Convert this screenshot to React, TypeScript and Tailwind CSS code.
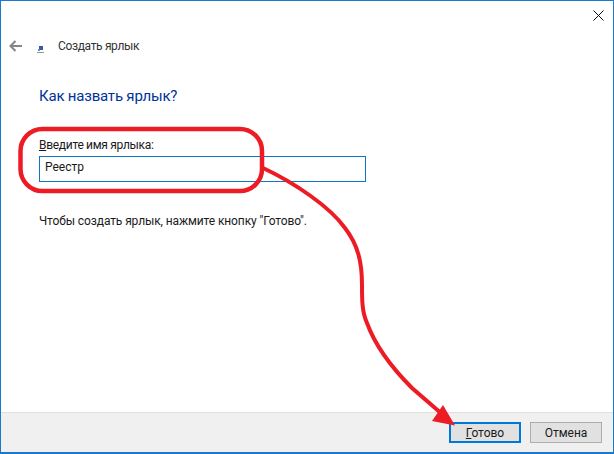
const font = { fontFamily: 'Roboto, "Noto Sans", sans-serif' }

function ShortcutIcon() {
  return (
    <svg width="7" height="7" viewBox="0 0 7 7" className="shrink-0">
      <rect x="2" y="0" width="4" height="4" fill="#2f5fa8" />
      <rect x="1" y="3" width="2" height="2" fill="#6f8ab5" />
      <rect x="0" y="6" width="7" height="1" fill="#8a93a0" />
    </svg>
  )
}

function Annotation() {
  return (
    <svg
      width="614"
      height="454"
      viewBox="0 0 614 454"
      className="absolute left-0 top-0 pointer-events-none"
      fill="none"
    >
      <rect x="20.5" y="129" width="241.5" height="62" rx="22" stroke="#ed1c24" strokeWidth="4.5" />
      <path
        d="M263 168 C295 183 330 207 345 228 C358 245 362 262 362 285 C362 300 362 312 367 323 C375 345 392 368 412 388 L442 414"
        stroke="#ed1c24"
        strokeWidth="4"
      />
      <path d="M443 405 L432 421 L455 425.5 Z" fill="#ed1c24" />
    </svg>
  )
}

export default function App() {
  return (
    <div
      className="relative w-[614px] h-[454px] overflow-hidden bg-white text-[12px] text-[#1a1a1a]"
      style={font}
    >
      <div className="flex h-[454px] flex-col border border-b-2 border-[#1979ca]">
        <div className="flex justify-end pr-[9px] pt-[9px]">
          <svg width="11" height="11" viewBox="0 0 11 11" stroke="#111" strokeWidth="1">
            <path d="M0.5 0.5 L10.5 10.5 M10.5 0.5 L0.5 10.5" />
          </svg>
        </div>

        <div className="mt-[17px] flex h-[16px] items-center pl-[8px]">
          <svg width="13" height="12" viewBox="0 0 13 12" fill="none" stroke="#858585" strokeWidth="2">
            <path d="M13 6 H2 M6.5 1 L1.5 6 L6.5 11" />
          </svg>
          <div className="ml-[15px] mt-[6px]">
            <ShortcutIcon />
          </div>
          <span className="ml-[14px] tracking-[-0.35px] text-[#333]">Создать ярлык</span>
        </div>

        <h1 className="ml-[38px] mt-[32px] text-[15px] leading-[20px] tracking-[-0.2px] text-[#003399]">Как назвать ярлык?</h1>

        <label className="ml-[38px] mt-[31px] leading-[16px] tracking-[-0.3px]">
          <span className="underline">В</span>ведите имя ярлыка:
        </label>
        <div className="ml-[38px] mt-[3px] flex h-[26px] w-[327px] items-start border border-[#0f74c4] pl-[5px] pt-[2px] leading-[16px]">
          Реестр
        </div>

        <p className="ml-[38px] mt-[31px] leading-[16px] tracking-[-0.11px]">Чтобы создать ярлык, нажмите кнопку "Готово".</p>

        <div className="mt-auto flex h-[40px] items-center justify-end gap-[9px] border-t border-[#dfdfdf] bg-[#f0f0f0] pr-[11px]">
          <button className="h-[21px] w-[72px] border-2 border-[#0078d7] bg-[#e1e1e1] leading-none">
            <span className="underline">Г</span>отово
          </button>
          <button className="h-[21px] w-[72px] border border-[#adadad] bg-[#e1e1e1] leading-none">
            Отмена
          </button>
        </div>
      </div>
      <Annotation />
    </div>
  )
}
